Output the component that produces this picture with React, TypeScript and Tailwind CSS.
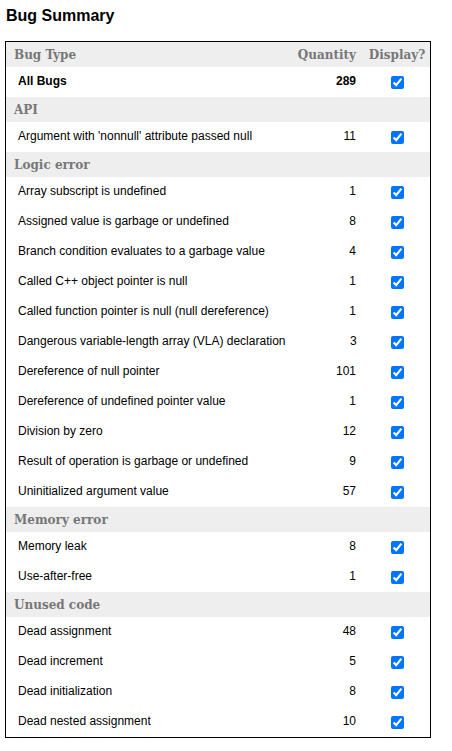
import React from 'react';

interface Bug {
  name: string;
  count: number;
}

interface Category {
  title: string;
  bugs: Bug[];
}

const categories: Category[] = [
  { title: 'API', bugs: [{ name: "Argument with 'nonnull' attribute passed null", count: 11 }] },
  {
    title: 'Logic error',
    bugs: [
      { name: 'Array subscript is undefined', count: 1 },
      { name: 'Assigned value is garbage or undefined', count: 8 },
      { name: 'Branch condition evaluates to a garbage value', count: 4 },
      { name: 'Called C++ object pointer is null', count: 1 },
      { name: 'Called function pointer is null (null dereference)', count: 1 },
      { name: 'Dangerous variable-length array (VLA) declaration', count: 3 },
      { name: 'Dereference of null pointer', count: 101 },
      { name: 'Dereference of undefined pointer value', count: 1 },
      { name: 'Division by zero', count: 12 },
      { name: 'Result of operation is garbage or undefined', count: 9 },
      { name: 'Uninitialized argument value', count: 57 },
    ],
  },
  {
    title: 'Memory error',
    bugs: [
      { name: 'Memory leak', count: 8 },
      { name: 'Use-after-free', count: 1 },
    ],
  },
  {
    title: 'Unused code',
    bugs: [
      { name: 'Dead assignment', count: 48 },
      { name: 'Dead increment', count: 5 },
      { name: 'Dead initialization', count: 8 },
      { name: 'Dead nested assignment', count: 10 },
    ],
  },
];

const serif = "font-['DejaVu_Serif',serif] font-bold text-[12px] text-[#777]";

function Check() {
  return (
    <div className="w-[66px] flex justify-center">
      <input type="checkbox" defaultChecked className="m-0 w-[13px] h-[13px]" />
    </div>
  );
}

function BugRow({ name, count, bold }: { name: string; count: number; bold?: boolean }) {
  return (
    <div className={`flex items-center h-[30px] bg-white text-[12px] text-black ${bold ? 'font-bold' : ''}`}>
      <div className="flex-1 pl-[12px] pb-[2px] whitespace-nowrap">{name}</div>
      <div className="w-[80px] text-right pr-[8px] pb-[2px]">{count}</div>
      <Check />
    </div>
  );
}

export default function App() {
  return (
    <div className="bg-white min-h-[751px] px-[5px] pt-[6px] font-['Liberation_Sans',Arial,sans-serif]">
      <h2 className="text-[16px] font-bold text-black leading-[20px] pl-[1px]">Bug Summary</h2>

      <div className="mt-[15px] w-[426px] border border-black">
        {/* Header */}
        <div className={`flex items-center h-[25px] bg-[#eee] ${serif}`}>
          <div className="flex-1 pl-[8px]">Bug Type</div>
          <div className="w-[80px] text-right pr-[8px]">Quantity</div>
          <div className="w-[66px] text-center">Display?</div>
        </div>

        <BugRow name="All Bugs" count={289} bold />

        {categories.map((cat) => (
          <div key={cat.title}>
            <div className={`flex items-center h-[25px] bg-[#eee] pl-[8px] ${serif}`}>{cat.title}</div>
            {cat.bugs.map((b) => (
              <BugRow key={b.name} name={b.name} count={b.count} />
            ))}
          </div>
        ))}
      </div>
    </div>
  );
}
